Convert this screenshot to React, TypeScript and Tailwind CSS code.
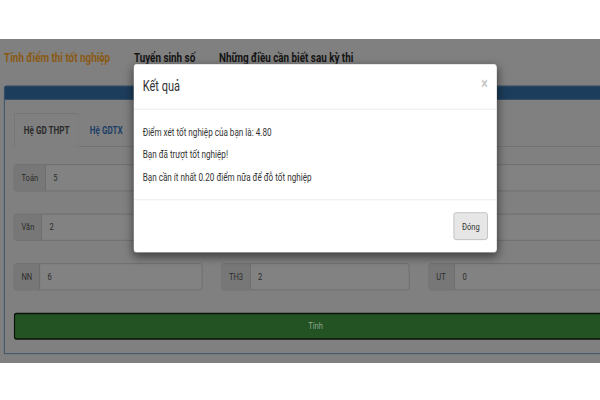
// fields under the dialog keep their boxes but show no text
const rows = [
  [
    ["Toán", "5"],
    ["", ""],
    ["", ""],
  ],
  [
    ["Văn", "2"],
    ["", ""],
    ["", ""],
  ],
  [
    ["NN", "6"],
    ["TH3", "2"],
    ["UT", "0"],
  ],
];

function Field({ label, value }: { label: string; value: string }) {
  return (
    <div className="flex h-[36px] rounded border border-[#666] bg-[#828282]">
      <div className="flex min-w-[44px] items-center border-r border-[#666] bg-[#777] px-3 text-[13px] text-[#2b2b2b]">
        {label}
      </div>
      <div className="flex items-center px-[13px] text-[13px] text-[#2b2b2b]">{value}</div>
    </div>
  );
}

export default function App() {
  return (
    <div className="h-[400px] w-full overflow-hidden bg-white pt-[39px] font-['Roboto',sans-serif]">
      <div className="h-[324px] overflow-hidden">
        {/* page drawn at its own size, squeezed like the screenshot */}
        <div className="relative h-[432px] w-[1088px] origin-top-left scale-x-[0.58] scale-y-[0.75] bg-[#808080]">
          {/* Top nav */}
          <div className="flex h-[50px] items-center gap-[41px] pl-[7px] text-[17px] font-bold">
            <span className="text-[#8a5a14]">Tính điểm thi tốt nghiệp</span>
            <span className="text-[#141414]">Tuyển sinh số</span>
            <span className="text-[#141414]">Những điều cần biết sau kỳ thi</span>
          </div>

          {/* Panel */}
          <div className="mx-[7px] mt-[12px] rounded-t border border-[#1a3d5c]">
            <div className="h-[18px] bg-[#1d3d5c]"></div>
            <div className="px-4 pb-[18px] pt-[18px]">
              {/* Tabs */}
              <div className="flex h-[45px] border-b border-[#6e6e6e]">
                <div className="-mb-px mr-[2px] flex items-center rounded-t border border-[#6e6e6e] border-b-[#808080] bg-[#808080] px-4 text-[14px] font-bold text-[#2b2b2b]">
                  Hệ GD THPT
                </div>
                <div className="flex items-center px-4 text-[14px] font-bold text-[#1d3f66]">Hệ GDTX</div>
              </div>

              <div className="flex flex-col gap-[30px] pt-[23px]">
                {rows.map((row, i) => (
                  <div key={i} className="grid grid-cols-3 gap-x-[33px]">
                    {row.map(([label, value], j) => (
                      <Field key={j} label={label} value={value} />
                    ))}
                  </div>
                ))}
                <button className="flex h-[36px] w-full items-center justify-center rounded border-2 border-[#0a120a] bg-[#235223] text-[13px] text-[#8fa88f]">
                  Tính
                </button>
              </div>
            </div>
          </div>

          {/* Modal */}
          <div className="absolute left-[230px] top-[33px] w-[627px] rounded-md border border-black/20 bg-white text-[#333] shadow-[0_5px_15px_rgba(0,0,0,0.5)]">
            <div className="flex h-[60px] items-center justify-between border-b border-[#e5e5e5] px-[15px]">
              <span className="text-[19px]">Kết quả</span>
              <span className="-mt-2 text-[21px] font-bold leading-none text-[#c9c9c9]">×</span>
            </div>
            <div className="px-[15px] py-[15px] text-[14px] leading-[30px]">
              <p>Điểm xét tốt nghiệp của bạn là: 4.80</p>
              <p>Bạn đã trượt tốt nghiệp!</p>
              <p>Bạn cần ít nhất 0.20 điểm nữa để đỗ tốt nghiệp</p>
            </div>
            <div className="flex justify-end border-t border-[#e5e5e5] px-[15px] py-4">
              <button className="h-[37px] rounded border border-[#adadad] bg-[#e6e6e6] px-[13px] text-[13px] text-[#333]">
                Đóng
              </button>
            </div>
          </div>
        </div>
      </div>
    </div>
  );
}
